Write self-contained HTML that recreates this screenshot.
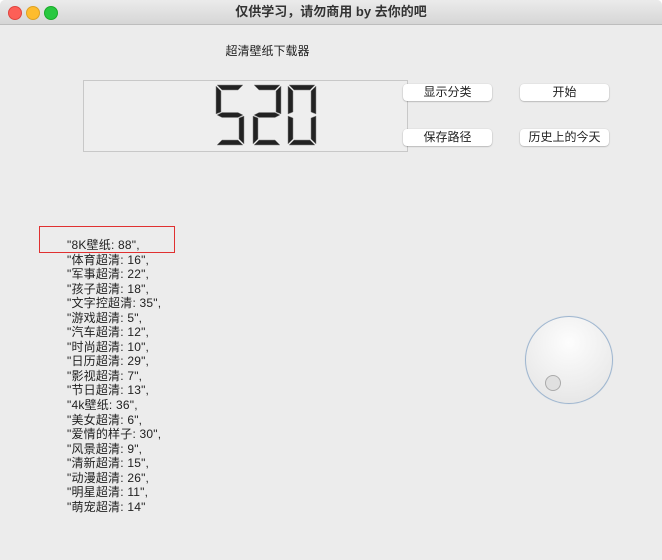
<!DOCTYPE html>
<html><head><meta charset="utf-8"><style>
body{margin:0;width:662px;height:560px;overflow:hidden;background:#fff;font-family:"Liberation Sans","Noto Sans CJK SC",sans-serif;}
.win{position:absolute;left:0;top:0;width:662px;height:560px;background:#ececec;border-radius:5px 5px 0 0;overflow:hidden}
.tb{position:absolute;left:0;top:0;width:662px;height:24px;background:linear-gradient(#ebebeb,#d6d6d6);border-bottom:1px solid #bdbdbd;text-align:center;font-size:13px;line-height:24px;color:#333;font-weight:bold}
.dot{position:absolute;top:6px;width:12px;height:12px;border-radius:50%}
.btn{position:absolute;width:89px;height:17px;background:#fff;border-radius:4px;box-shadow:0 0.5px 1.5px rgba(0,0,0,.35);font-size:12px;line-height:17px;text-align:center;color:#222}
.list{position:absolute;left:67px;top:238px;font-size:12px;line-height:14.55px;color:#222;white-space:pre;letter-spacing:0.2px}
</style></head><body><div class="win">
<div class="tb">仅供学习，请勿商用 by 去你的吧
<div class="dot" style="left:8px;background:#fd5f57;border:.5px solid #e0443e"></div>
<div class="dot" style="left:26px;background:#febc2e;border:.5px solid #dea123"></div>
<div class="dot" style="left:44px;background:#28c840;border:.5px solid #1aab29"></div>
</div>
<div style="position:absolute;left:200px;top:42px;width:135px;text-align:center;font-size:12px;color:#222">超清壁纸下载器</div>
<div style="position:absolute;left:83px;top:80px;width:323px;height:70px;border:1px solid #c8c8c8;background:#eeeeee"></div>
<svg style="position:absolute;left:0;top:0" width="662" height="200">
<defs>
<polygon id="a" points="1,0 27,0 22,5 6,5"/>
<polygon id="b" points="28,1 28,29 23,27 23,6"/>
<polygon id="c" points="28,31 28,59 23,54 23,33"/>
<polygon id="d" points="1,60 27,60 22,55 6,55"/>
<polygon id="e" points="0,31 5,33 5,54 0,59"/>
<polygon id="f" points="0,1 5,6 5,27 0,29"/>
<polygon id="g" points="1,30 6,27.5 22,27.5 27,30 22,32.5 6,32.5"/>
</defs>
<g fill="#222" stroke="#888" stroke-width="0.5">
<g transform="translate(216,85)"><use href="#a"/><use href="#f"/><use href="#g"/><use href="#c"/><use href="#d"/></g>
<g transform="translate(253,85)"><use href="#a"/><use href="#b"/><use href="#g"/><use href="#e"/><use href="#d"/></g>
<g transform="translate(288,85)"><use href="#a"/><use href="#b"/><use href="#c"/><use href="#d"/><use href="#e"/><use href="#f"/></g>
</g></svg>
<div class="btn" style="left:403px;top:84px">显示分类</div>
<div class="btn" style="left:520px;top:84px">开始</div>
<div class="btn" style="left:403px;top:129px">保存路径</div>
<div class="btn" style="left:520px;top:129px">历史上的今天</div>
<div style="position:absolute;left:39px;top:226px;width:134px;height:25px;border:1px solid #e03030"></div>
<div class="list">"8K壁纸: 88",
"体育超清: 16",
"军事超清: 22",
"孩子超清: 18",
"文字控超清: 35",
"游戏超清: 5",
"汽车超清: 12",
"时尚超清: 10",
"日历超清: 29",
"影视超清: 7",
"节日超清: 13",
"4k壁纸: 36",
"美女超清: 6",
"爱情的样子: 30",
"风景超清: 9",
"清新超清: 15",
"动漫超清: 26",
"明星超清: 11",
"萌宠超清: 14"</div>
<div style="position:absolute;left:525px;top:316px;width:86px;height:86px;border-radius:50%;background:radial-gradient(circle at 50% 30%,#fdfdfd,#e2e2e2);border:1px solid #9fb6cf;box-shadow:0 0 1px #c6d6e6"></div>
<div style="position:absolute;left:545px;top:375px;width:14px;height:14px;border-radius:50%;background:#e0e0e0;border:1px solid #aaa"></div>
</div></body></html>
